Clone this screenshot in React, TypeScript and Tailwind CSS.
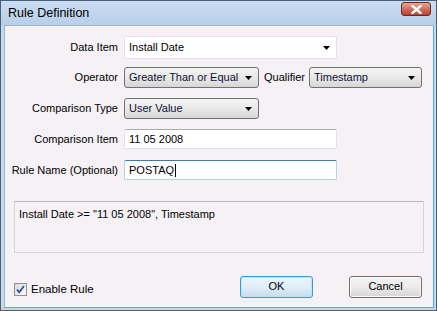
import React from 'react';

function Arrow() {
  return (
    <svg width="7" height="4" viewBox="0 0 7 4" className="shrink-0">
      <path d="M0 0h7L3.5 4z" fill="#000" />
    </svg>
  );
}

function Select({ value, width }: { value: string; width: string }) {
  return (
    <div
      className={`${width} h-[21px] shrink-0 flex items-center justify-between pl-[4px] pr-[6px] rounded-[3px] border border-[#707070] bg-gradient-to-b from-[#f3f3f3] via-[#e9e9e9] to-[#d6d6d6]`}
    >
      <span className="text-[#111133] whitespace-nowrap">{value}</span>
      <Arrow />
    </div>
  );
}

function Label({ children }: { children: React.ReactNode }) {
  return <div className="w-[114px] text-right pr-[1px] shrink-0 whitespace-nowrap">{children}</div>;
}

export default function App() {
  return (
    <div
      className="w-[437px] h-[311px] flex flex-col bg-[#c3d8ee] border border-[#4a6078] text-[11px] text-black whitespace-nowrap"
      style={{ fontFamily: '"Liberation Sans", Arial, sans-serif' }}
    >
      {/* Title bar */}
      <div className="h-[24px] shrink-0 flex items-center justify-between pl-[7px] pr-[5px] bg-gradient-to-b from-[#cadcf0] to-[#b8cfe8]">
        <span className="text-[12.5px] text-black">Rule Definition</span>
        <div className="w-[30px] h-[14px] -mt-[8px] flex items-center justify-center rounded-[3px] border border-[#6e2a22] bg-gradient-to-b from-[#e4a596] via-[#d0705e] to-[#b8402c]">
          <svg width="11" height="9" viewBox="0 0 11 9">
            <path d="M1.5 1l8 7M9.5 1l-8 7" stroke="#fff" strokeWidth="2.4" strokeLinecap="square" />
          </svg>
        </div>
      </div>

      {/* Client area */}
      <div className="flex-1 ml-[3px] mr-[2px] mb-[2px] flex flex-col bg-[#f5f1f5] border border-[#9bb4cf] border-r-[#38b8ee] border-b-[#38b8ee]">
        <div className="flex flex-col pt-[10px]">
          <div className="flex items-center h-[23px]">
            <Label>Data Item</Label>
            <div className="ml-[5px] w-[213px] h-[23px] flex items-center justify-between pl-[4px] pr-[6px] bg-white border border-[#e2e2e8] rounded-[2px]">
              <span>Install Date</span>
              <Arrow />
            </div>
          </div>

          <div className="flex items-center mt-[8px]">
            <Label>Operator</Label>
            <div className="ml-[5px]">
              <Select value="Greater Than or Equal" width="w-[135px]" />
            </div>
            <span className="ml-[5px]">Qualifier</span>
            <div className="ml-[4px]">
              <Select value="Timestamp" width="w-[113px]" />
            </div>
          </div>

          <div className="flex items-center mt-[10px]">
            <Label>Comparison Type</Label>
            <div className="ml-[5px]">
              <Select value="User Value" width="w-[135px]" />
            </div>
          </div>

          <div className="flex items-center mt-[10px]">
            <Label>Comparison Item</Label>
            <div className="ml-[5px] w-[213px] h-[20px] flex items-center pl-[4px] bg-white border border-[#e2e3ea] border-t-[#ababab] rounded-[2px]">
              11 05 2008
            </div>
          </div>

          <div className="flex items-center mt-[11px]">
            <Label>Rule Name (Optional)</Label>
            <div className="ml-[5px] w-[213px] h-[20px] flex items-center pl-[4px] bg-white border border-[#b5d4e8] border-t-[#3d7bad] rounded-[2px]">
              <span>POSTAQ</span>
              <span className="w-[1px] h-[13px] bg-black ml-[1px]" />
            </div>
          </div>
        </div>

        {/* Summary */}
        <div className="mt-[21px] ml-[9px] w-[410px] h-[52px] pl-[4px] pt-[4px] border border-[#d5d5d5] border-t-[#b6b6b6] rounded-[1px] bg-[#f5f1f5]">
          Install Date &gt;= "11 05 2008", Timestamp
        </div>

        {/* Footer */}
        <div className="flex items-center mt-[22px] ml-[9px]">
          <div className="flex items-center mt-[6px]">
            <div className="w-[13px] h-[13px] border border-[#8f8f8f] bg-gradient-to-br from-[#dcdcdc] to-[#fbfbfb] flex items-center justify-center">
              <svg width="9" height="9" viewBox="0 0 9 9">
                <path d="M1 4.5l2.2 2.8L8 1" stroke="#2a4fa8" strokeWidth="1.8" fill="none" />
              </svg>
            </div>
            <span className="ml-[4px] text-[11.5px]">Enable Rule</span>
          </div>
          <div className="ml-auto mr-[11px] flex items-center gap-[36px]">
            <div className="w-[73px] h-[22px] flex items-center justify-center rounded-[3px] border border-[#3c9ad6] bg-gradient-to-b from-[#eaf6fd] via-[#e0eef8] to-[#c6dcec] shadow-[inset_0_0_0_1px_#bde4f8]">
              OK
            </div>
            <div className="w-[73px] h-[22px] flex items-center justify-center rounded-[3px] border border-[#707070] bg-gradient-to-b from-[#f2f2f2] via-[#ebebeb] to-[#d6d6d6] shadow-[inset_0_0_0_1px_#fafafa]">
              Cancel
            </div>
          </div>
        </div>
      </div>
    </div>
  );
}
